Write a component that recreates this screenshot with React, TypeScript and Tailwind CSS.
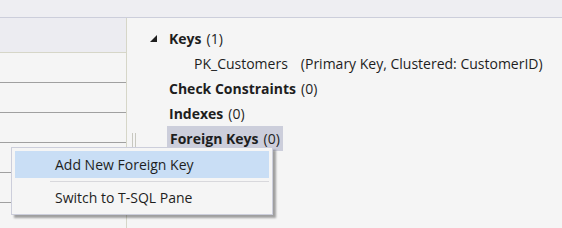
import React from "react";

const rows = [0, 1, 2, 3, 4];

function Triangle() {
  return (
    <svg width="7" height="7" viewBox="0 0 7 7" className="block">
      <polygon points="7,0 7,7 0,7" fill="#1e1e1e" />
    </svg>
  );
}

export default function App() {
  return (
    <div
      className="relative w-[562px] h-[228px] overflow-hidden bg-[#f5f5f5] text-[#1e1e1e] flex flex-col"
      style={{ fontFamily: '"Open Sans", "Noto Sans", sans-serif' }}
    >
      {/* top strip */}
      <div className="h-[18px] shrink-0 bg-[#eeeef2] border-b border-[#cccedb]" />

      <div className="flex flex-1 min-h-0">
        {/* left grid */}
        <div className="w-[127px] shrink-0 border-r border-[#d6d6c8] flex flex-col">
          <div className="h-[35px] shrink-0 bg-[#ececf1] border-b border-[#d6d6c8]" />
          {rows.map((r) => (
            <div key={r} className="h-[30px] shrink-0 border-b border-[#a0a0a0]" />
          ))}
        </div>

        {/* splitter grip */}
        <div className="w-[22px] shrink-0 flex items-start pt-[115px] pl-[5px] gap-[2px]">
          <div className="w-px h-[14px] bg-[#c8c8c0]" />
          <div className="w-px h-[14px] bg-[#c8c8c0]" />
        </div>

        {/* tree */}
        <div className="flex-1 pt-[8px] text-[14px] leading-[25px]">
          <div className="flex items-center h-[25px]">
            <div className="w-[20px] flex justify-start pl-px">
              <Triangle />
            </div>
            <span className="font-bold">Keys</span>
            <span className="ml-[5px]">(1)</span>
          </div>
          <div className="flex items-center h-[25px] pl-[45px]">
            <span>PK_Customers</span>
            <span className="ml-[13px]">(Primary Key, Clustered: CustomerID)</span>
          </div>
          <div className="flex items-center h-[25px] pl-[20px]">
            <span className="font-bold">Check Constraints</span>
            <span className="ml-[5px]">(0)</span>
          </div>
          <div className="flex items-center h-[25px] pl-[20px]">
            <span className="font-bold">Indexes</span>
            <span className="ml-[5px]">(0)</span>
          </div>
          <div className="flex items-center h-[25px] pl-[18px]">
            <div className="flex items-center h-[25px] px-[3px] bg-[#cccedb]">
              <span className="font-bold">Foreign Keys</span>
              <span className="ml-[5px]">(0)</span>
            </div>
          </div>
        </div>
      </div>

      {/* context menu */}
      <div className="absolute left-[11px] top-[147px] w-[262px] bg-[#f5f5f5] border border-[#cccedb] p-[3px] shadow-[3px_3px_2px_rgba(0,0,0,0.35)] text-[14px]">
        <div className="h-[27px] flex items-center pl-[40px] bg-[#c9def5]">
          Add New Foreign Key
        </div>
        <div className="h-[6px] flex items-center pl-[35px]">
          <div className="h-px w-full bg-[#d8d8dc]" />
        </div>
        <div className="h-[27px] flex items-center pl-[40px]">Switch to T-SQL Pane</div>
      </div>
    </div>
  );
}
